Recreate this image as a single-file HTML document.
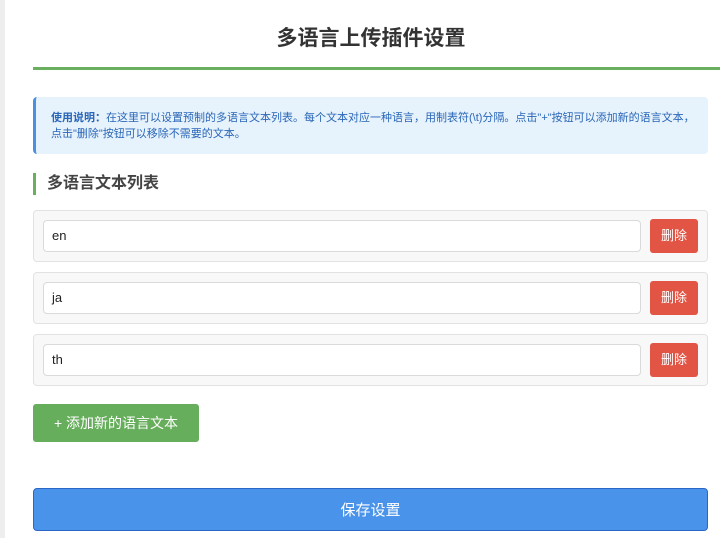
<!DOCTYPE html>
<html><head><meta charset="utf-8"><style>
*{box-sizing:border-box;margin:0;padding:0}
body{width:720px;height:538px;overflow:hidden;background:#fff;font-family:"Liberation Sans","Noto Sans CJK SC",sans-serif;position:relative}
.strip{position:absolute;left:0;top:0;width:5px;height:538px;background:#eeeeee}
.abs{position:absolute}
h1{position:absolute;left:33px;width:676px;top:25px;text-align:center;font-size:21px;font-weight:bold;color:#333;line-height:28px}
.line{left:33px;top:67px;width:687px;height:3px;background:#6aaf5e}
.info{left:33px;top:97px;width:675px;height:57px;background:#e6f2fc;border-left:3px solid #4a90e2;border-radius:4px;padding:13px 12px 0 15px;font-size:11px;line-height:16px;color:#2a66b8}
.sec{left:33px;top:173px;height:22px;border-left:3px solid #6aaf5e;padding-left:11px;font-size:16px;font-weight:bold;color:#444;line-height:22px}
.row{left:33px;width:675px;height:52px;background:#f8f8f8;border:1px solid #e2e2e2;border-radius:4px}
.inp{position:absolute;left:9px;top:9px;width:598px;height:32px;background:#fff;border:1px solid #dadada;border-radius:4px;font-size:13px;color:#222;padding-left:8px;line-height:30px}
.del{position:absolute;left:616px;top:8px;width:48px;height:34px;background:#e25443;border-radius:3px;color:#fff;font-size:13px;text-align:center;line-height:34px}
.add{left:33px;top:404px;width:166px;height:38px;background:#67ae5c;border-radius:3px;color:#fff;font-size:14px;text-align:center;line-height:38px}
.save{left:33px;top:488px;width:675px;height:43px;background:#4a93ea;border:1.5px solid #2c66c8;border-radius:4px;color:#fff;font-size:15px;text-align:center;line-height:43px}
</style></head><body>
<div class="strip"></div>
<h1>多语言上传插件设置</h1>
<div class="abs line"></div>
<div class="abs info"><b>使用说明：</b>在这里可以设置预制的多语言文本列表。每个文本对应一种语言，用制表符(\t)分隔。点击"+"按钮可以添加新的语言文本，<br>点击"删除"按钮可以移除不需要的文本。</div>
<div class="abs sec">多语言文本列表</div>
<div class="abs row" style="top:210px"><div class="inp">en</div><div class="del">删除</div></div>
<div class="abs row" style="top:272px"><div class="inp">ja</div><div class="del">删除</div></div>
<div class="abs row" style="top:334px"><div class="inp">th</div><div class="del">删除</div></div>
<div class="abs add">+ 添加新的语言文本</div>
<div class="abs save">保存设置</div>
</body></html>
